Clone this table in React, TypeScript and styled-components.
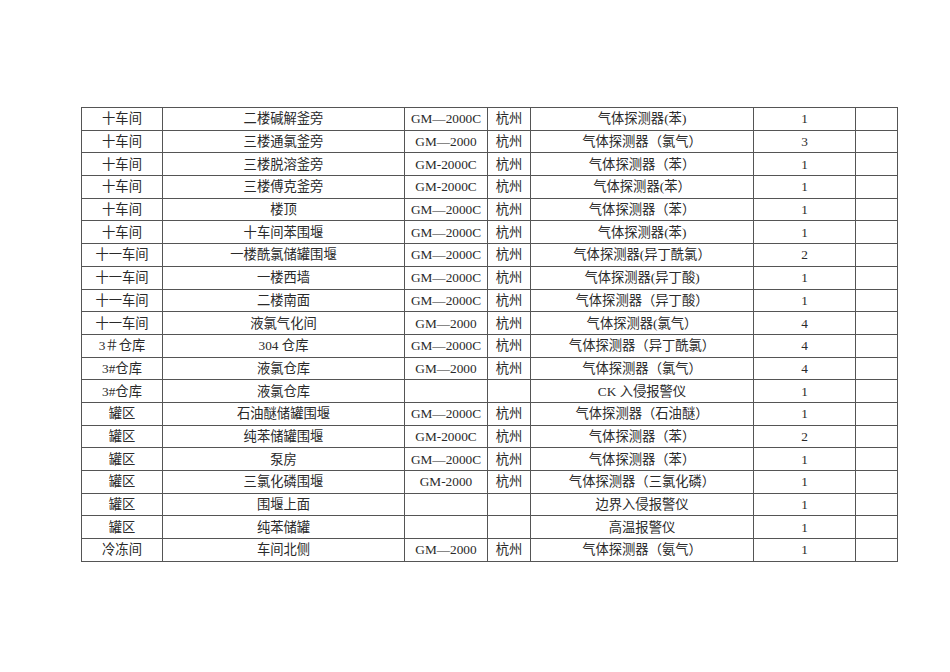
import React from 'react';
import styled, { createGlobalStyle } from 'styled-components';

const GlobalStyle = createGlobalStyle`
  html, body {
    margin: 0;
    padding: 0;
    background: #ffffff;
  }
  body {
    font-family: "Liberation Serif", "Noto Sans CJK SC", serif;
    color: #222;
  }
`;

type Item = [string, string, string, string, string, string];

const rows: Item[] = [
  ['十车间', '二楼碱解釜旁', 'GM—2000C', '杭州', '气体探测器(苯)', '1'],
  ['十车间', '三楼通氯釜旁', 'GM—2000', '杭州', '气体探测器（氯气）', '3'],
  ['十车间', '三楼脱溶釜旁', 'GM-2000C', '杭州', '气体探测器（苯）', '1'],
  ['十车间', '三楼傅克釜旁', 'GM-2000C', '杭州', '气体探测器(苯）', '1'],
  ['十车间', '楼顶', 'GM—2000C', '杭州', '气体探测器（苯）', '1'],
  ['十车间', '十车间苯围堰', 'GM—2000C', '杭州', '气体探测器(苯)', '1'],
  ['十一车间', '一楼酰氯储罐围堰', 'GM—2000C', '杭州', '气体探测器(异丁酰氯）', '2'],
  ['十一车间', '一楼西墙', 'GM—2000C', '杭州', '气体探测器(异丁酸)', '1'],
  ['十一车间', '二楼南面', 'GM—2000C', '杭州', '气体探测器（异丁酸）', '1'],
  ['十一车间', '液氯气化间', 'GM—2000', '杭州', '气体探测器(氯气）', '4'],
  ['3＃仓库', '304 仓库', 'GM—2000C', '杭州', '气体探测器（异丁酰氯）', '4'],
  ['3#仓库', '液氯仓库', 'GM—2000', '杭州', '气体探测器（氯气）', '4'],
  ['3#仓库', '液氯仓库', '', '', 'CK 入侵报警仪', '1'],
  ['罐区', '石油醚储罐围堰', 'GM—2000C', '杭州', '气体探测器（石油醚）', '1'],
  ['罐区', '纯苯储罐围堰', 'GM-2000C', '杭州', '气体探测器（苯）', '2'],
  ['罐区', '泵房', 'GM—2000C', '杭州', '气体探测器（苯）', '1'],
  ['罐区', '三氯化磷围堰', 'GM-2000', '杭州', '气体探测器（三氯化磷）', '1'],
  ['罐区', '围堰上面', '', '', '边界入侵报警仪', '1'],
  ['罐区', '纯苯储罐', '', '', '高温报警仪', '1'],
  ['冷冻间', '车间北侧', 'GM—2000', '杭州', '气体探测器（氨气）', '1'],
];

const widths = [81, 242, 83, 43, 223, 102, 42];

const Page = styled.div`
  padding: 107px 0 0 81px;
`;

const Sheet = styled.table`
  border-collapse: collapse;
  table-layout: fixed;
  width: 816px;
  border: 1px solid #444;
`;

const Column = styled.col<{ $w: number }>`
  width: ${(p) => p.$w}px;
`;

const Row = styled.tr`
  height: 22.7px;
`;

const Cell = styled.td`
  border: 1px solid #555;
  padding: 1px 0 0;
  text-align: center;
  vertical-align: middle;
  font-size: 13.3px;
  line-height: 20px;
  white-space: nowrap;
  overflow: hidden;
  color: #2a2a2a;
`;

export default function App() {
  return (
    <>
      <GlobalStyle />
      <Page>
        <Sheet>
          <colgroup>
            {widths.map((w, i) => (
              <Column key={i} $w={w} />
            ))}
          </colgroup>
          <tbody>
            {rows.map((r, i) => (
              <Row key={i}>
                {r.map((c, j) => (
                  <Cell key={j}>{c}</Cell>
                ))}
                <Cell />
              </Row>
            ))}
          </tbody>
        </Sheet>
      </Page>
    </>
  );
}
